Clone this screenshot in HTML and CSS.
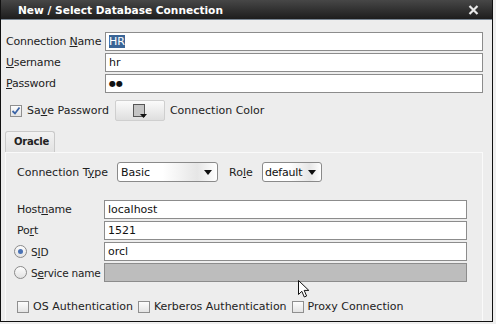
FILE: index.html
```html
<!DOCTYPE html>
<html lang="en">
<head>
    <meta charset="UTF-8">
    <title>New / Select Database Connection</title>
    <link rel="stylesheet" href="styles.css">
</head>
<body>
    <div class="window">
        <div class="titlebar">
            <span class="title">New / Select Database Connection</span>
            <svg class="close" width="11" height="10" viewBox="0 0 11 10">
                <path d="M1.5 1 L9.5 9 M9.5 1 L1.5 9" stroke="#e8e8e8" stroke-width="2.2"/>
            </svg>
        </div>

        <div class="content">
            <div class="fields">
                <label class="label">Connection <u>N</u>ame</label>
                <div class="input"><span class="selected">HR</span></div>
                <label class="label"><u>U</u>sername</label>
                <div class="input">hr</div>
                <label class="label"><u>P</u>assword</label>
                <div class="input dots">●●</div>
            </div>

            <div class="save-row">
                <span class="check checked">
                    <svg width="10" height="10" viewBox="0 0 10 10"><path d="M1.5 5 L4 7.5 L8.5 1.5" fill="none" stroke="#3b64a6" stroke-width="1.8"/></svg>
                </span>
                <span class="check-text">Sa<u>v</u>e Password</span>
                <span class="color-btn">
                    <svg width="16" height="16" viewBox="0 0 16 16">
                        <rect x="1.5" y="1.5" width="11" height="12" fill="#c4c4c4" stroke="#555"/>
                        <path d="M8 11 L15 11 L11.5 15 Z" fill="#111"/>
                    </svg>
                </span>
                <span class="check-text">Connection Color</span>
            </div>

            <div class="tabs">
                <div class="tab">Oracle</div>
            </div>

            <div class="panel">
                <div class="type-row">
                    <span class="type-label">Connection T<u>y</u>pe</span>
                    <span class="combo combo-type">Basic</span>
                    <span class="role-label">Ro<u>l</u>e</span>
                    <span class="combo combo-role">default</span>
                </div>

                <div class="fields conn-fields">
                    <label class="label">Host<u>n</u>ame</label>
                    <div class="input">localhost</div>
                    <label class="label">Po<u>r</u>t</label>
                    <div class="input">1521</div>
                    <label class="label radio-label"><span class="radio on"></span>S<u>I</u>D</label>
                    <div class="input">orcl</div>
                    <label class="label radio-label"><span class="radio"></span>S<u>e</u>rvice name</label>
                    <div class="input disabled"></div>
                </div>

                <div class="auth-row">
                    <span class="check"></span><span class="check-text">OS Authentication</span>
                    <span class="check"></span><span class="check-text">Kerberos Authentication</span>
                    <span class="check"></span><span class="check-text">Proxy Connection</span>
                </div>
            </div>
        </div>

        <svg class="cursor" width="13" height="19" viewBox="0 0 13 19">
            <path d="M0.5 0.5 L0.5 14.5 L3.8 11.3 L6.3 17 L8.6 16 L6.2 10.4 L10.8 10.4 Z" fill="#fff" stroke="#111" stroke-width="1"/>
        </svg>
    </div>
</body>
</html>
```

FILE: styles.css
```css
body {
    margin: 0;
    background: #efefef;
    font-family: "DejaVu Sans", sans-serif;
    font-size: 11px;
    color: #222;
}
u {
    text-decoration-thickness: 1px;
    text-underline-offset: 1px;
}
.window {
    position: relative;
    width: 493px;
    height: 322px;
    box-sizing: border-box;
    border: 1px solid #111;
    border-top: 0;
    background: #ededed;
    overflow: hidden;
}
.titlebar {
    height: 19px;
    display: flex;
    align-items: center;
    justify-content: space-between;
    padding: 0 13px 0 17px;
    background: linear-gradient(#474747, #1d1d1d);
    border-bottom: 1px solid #7a8794;
}
.title {
    color: #fff;
    font-weight: bold;
    font-size: 10.6px;
}
.content {
    padding: 12px 9px 0 5px;
}
.fields {
    display: grid;
    grid-template-columns: 99px 1fr;
    grid-auto-rows: 19px;
    row-gap: 2px;
}
.label {
    align-self: center;
    white-space: nowrap;
    letter-spacing: -0.2px;
}
.input {
    box-sizing: border-box;
    height: 19px;
    border: 1px solid #8c8c8c;
    background: #fff;
    padding: 0 3px;
    line-height: 17px;
    color: #111;
}
.input.disabled {
    background: #bdbdbd;
}
.selected {
    background: #3a6597;
    color: #fff;
}
.dots {
    font-size: 8px;
    letter-spacing: 0;
}
.save-row {
    display: flex;
    align-items: center;
    height: 21px;
    margin-top: 7px;
    padding-left: 4px;
}
.check {
    box-sizing: border-box;
    width: 12px;
    height: 12px;
    border: 1px solid #8f8f8f;
    background: linear-gradient(#fdfdfd, #e4e4e4);
    display: inline-flex;
    align-items: center;
    justify-content: center;
    flex: none;
}
.check-text {
    margin-left: 5px;
    white-space: nowrap;
}
.color-btn {
    box-sizing: border-box;
    width: 50px;
    height: 21px;
    margin-left: 6px;
    border: 1px solid #cfcfcf;
    border-radius: 2px;
    background: linear-gradient(#fbfbfb, #dedede);
    display: flex;
    align-items: center;
    justify-content: center;
}
.tabs {
    display: flex;
    margin: 10px 0 0 -1px;
}
.tab {
    box-sizing: border-box;
    width: 50px;
    height: 21px;
    border: 1px solid #c9c9c9;
    border-bottom: 0;
    border-radius: 3px 3px 0 0;
    background: linear-gradient(#f2f2f2, #e2e2e2);
    font-weight: bold;
    font-size: 10px;
    letter-spacing: -0.2px;
    padding: 4px 0 0 8px;
}
.panel {
    box-sizing: border-box;
    height: 172px;
    margin-left: -1px;
    border: 1px solid #fafafa;
    border-bottom: 0;
    padding: 9px 15px 0 11px;
}
.type-row {
    display: flex;
    align-items: center;
    height: 20px;
}
.type-label {
    width: 100px;
}
.role-label {
    margin-left: 11px;
    width: 33px;
}
.combo {
    position: relative;
    box-sizing: border-box;
    height: 20px;
    border: 1px solid #8a8a8a;
    border-radius: 3px;
    background: linear-gradient(90deg, #fff 45%, #e6e6e6 80%, #fff);
    padding: 0 3px;
    line-height: 19px;
    color: #111;
}
.combo::after {
    content: "";
    position: absolute;
    right: 5px;
    top: 7px;
    border-left: 4.5px solid transparent;
    border-right: 4.5px solid transparent;
    border-top: 5px solid #111;
}
.combo-type {
    width: 101px;
}
.combo-role {
    width: 60px;
    padding-left: 2px;
    letter-spacing: -0.2px;
}
.conn-fields {
    grid-template-columns: 87px 1fr;
    margin-top: 18px;
}
.radio-label {
    display: flex;
    align-items: center;
    margin-left: -3px;
    font-size: 10.5px;
}
.radio {
    box-sizing: border-box;
    width: 13px;
    height: 13px;
    border: 1px solid #8a8a8a;
    border-radius: 50%;
    background: linear-gradient(#fdfdfd, #e2e2e2);
    margin-right: 4px;
    display: inline-flex;
    align-items: center;
    justify-content: center;
}
.radio.on::after {
    content: "";
    width: 5px;
    height: 5px;
    border-radius: 50%;
    background: #4a72b4;
}
.auth-row {
    display: flex;
    align-items: center;
    margin-top: 18px;
}
.auth-row .check-text {
    margin-left: 4px;
    margin-right: 5px;
}
.cursor {
    position: absolute;
    left: 297px;
    top: 280px;
}
```
